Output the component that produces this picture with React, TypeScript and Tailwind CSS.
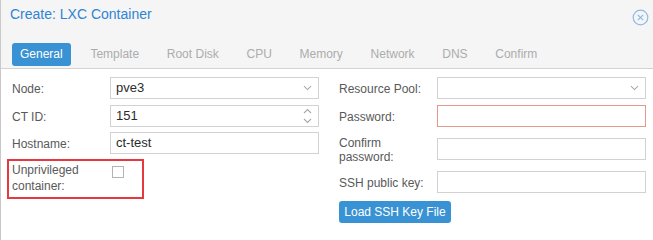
import React from "react";

const Chevron = () => (
  <svg width="9" height="6" viewBox="0 0 9 6" className="shrink-0">
    <path d="M1 1.2 L4.5 4.6 L8 1.2" fill="none" stroke="#a9a9a9" strokeWidth="1.1" />
  </svg>
);

const Spinner = () => (
  <svg width="9" height="16" viewBox="0 0 9 16" className="shrink-0">
    <path d="M1 5 L4.5 1.5 L8 5" fill="none" stroke="#a9a9a9" strokeWidth="1.1" />
    <path d="M1 11 L4.5 14.5 L8 11" fill="none" stroke="#a9a9a9" strokeWidth="1.1" />
  </svg>
);

const Field = ({
  value,
  trigger,
  invalid,
}: {
  value?: string;
  trigger?: React.ReactNode;
  invalid?: boolean;
}) => (
  <div
    className={`w-[209px] h-[22px] bg-white border flex items-center justify-between pl-[5px] pr-[6px] ${
      invalid ? "border-[#e39888]" : "border-[#d2d2d2]"
    }`}
  >
    <span className="text-[13px] leading-[20px] text-[#2b2b2b]">{value}</span>
    {trigger}
  </div>
);

const Row = ({
  label,
  children,
  className = "",
}: {
  label: string;
  children: React.ReactNode;
  className?: string;
}) => (
  <div className={`flex items-center h-[22px] ${className}`}>
    <div className="w-[98px] text-[12px] leading-[16px] pt-[1px] text-[#595959]">{label}</div>
    {children}
  </div>
);

export default function App() {
  const tabs = ["Template", "Root Disk", "CPU", "Memory", "Network", "DNS", "Confirm"];
  return (
    <div className="w-[653px] h-[240px] bg-white border-l border-[#c9c9c9] overflow-hidden font-['Liberation_Sans',Arial,sans-serif]">
      <div className="h-[69px] bg-[#f5f5f5] border-b border-[#d3d3d3]">
        <div className="flex justify-between items-start pl-[9px] pr-[4px] pt-[6px]">
          <div className="text-[14px] leading-[16px] text-[#2f84d3]">Create: LXC Container</div>
          <svg width="17" height="17" viewBox="0 0 17 17" className="mt-[3px]">
            <circle cx="8.5" cy="8.5" r="7.3" fill="none" stroke="#8dbbe6" strokeWidth="1.2" />
            <path d="M5.8 5.8 L11.2 11.2 M11.2 5.8 L5.8 11.2" stroke="#8dbbe6" strokeWidth="1.2" />
          </svg>
        </div>
        <div className="flex items-center gap-[11.7px] pl-[11px] mt-[17px]">
          <div className="h-[23px] px-[8px] rounded-[3px] bg-[#3892d4] text-white text-[12px] leading-[23px]">
            General
          </div>
          {tabs.map((t) => (
            <div key={t} className="h-[23px] px-[8px] text-[#acacac] text-[12px] leading-[23px]">
              {t}
            </div>
          ))}
        </div>
      </div>

      <div className="flex pl-[11px] pt-[8px]">
        <div className="w-[307px] flex flex-col">
          <Row label="Node:">
            <Field value="pve3" trigger={<Chevron />} />
          </Row>
          <Row label="CT ID:" className="mt-[6px]">
            <Field value="151" trigger={<Spinner />} />
          </Row>
          <Row label="Hostname:" className="mt-[5px]">
            <Field value="ct-test" />
          </Row>
          <div className="relative flex items-start mt-[5px] h-[40px]">
            <div className="w-[98px] pt-[3px] text-[12px] leading-[16px] text-[#595959]">
              Unprivileged
              <br />
              container:
            </div>
            <div className="ml-[2px] mt-[7px] w-[12px] h-[12px] border border-[#b3b3b3] bg-white" />
            <div className="absolute left-[-5px] top-0 w-[137px] h-[40px] border-2 border-[#e5383f]" />
          </div>
        </div>

        <div className="w-[307px] ml-[20px] flex flex-col">
          <Row label="Resource Pool:">
            <Field trigger={<Chevron />} />
          </Row>
          <Row label="Password:" className="mt-[6px]">
            <Field invalid />
          </Row>
          <div className="flex items-start mt-[5px] h-[33px]">
            <div className="w-[98px] pt-[4px] text-[12px] leading-[14px] text-[#595959]">
              Confirm
              <br />
              password:
            </div>
            <div className="mt-[6px]">
              <Field />
            </div>
          </div>
          <Row label="SSH public key:" className="mt-[6px]">
            <Field />
          </Row>
          <div className="mt-[6px]">
            <div className="inline-flex items-center justify-center w-[112px] h-[22px] rounded-[3px] bg-[#3892d4] text-white text-[12px] leading-[22px]">
              Load SSH Key File
            </div>
          </div>
        </div>
      </div>
    </div>
  );
}
